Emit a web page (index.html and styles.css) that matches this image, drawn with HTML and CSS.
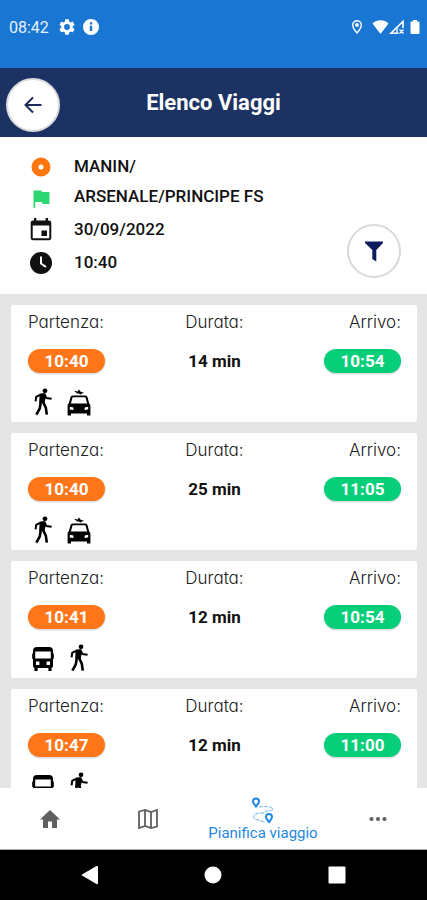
FILE: index.html
```html
<!DOCTYPE html>
<html lang="it">
<head>
<meta charset="utf-8">
<meta name="viewport" content="width=device-width, initial-scale=1">
<title>Elenco Viaggi</title>
<link rel="stylesheet" href="styles.css">
</head>
<body>
<svg class="sprite" aria-hidden="true">
  <symbol id="walk" viewBox="0 0 24 28">
    <circle cx="14" cy="2.800" r="2.400"/>
    <path d="M9.200 6.800 13.600 6.400 15.400 10 20.600 10.800" fill="none" stroke="currentColor" stroke-width="2"/>
    <path d="M9 6.800 5.200 8.800 4.600 13.400" fill="none" stroke="currentColor" stroke-width="2"/>
    <path d="M8.600 5.800 13.800 5.400 15 8 13.600 15 8.200 15Z"/>
    <path d="M9.800 14 8.800 20.400 5.400 26.600M12 14 14.800 19.600 15.800 26.600" fill="none" stroke="currentColor" stroke-width="2.600"/>
  </symbol>
  <symbol id="taxi" viewBox="0 0 24 28">
    <path d="M7 2.800 11 3.600 11.600 1.200 14 4 17 4.400 13.400 6.600 12 5.400 10.200 5.400Z"/>
    <path fill-rule="evenodd" d="M5.600 7.400H18.400Q20 7.400 20.500 9L22.200 15.400Q23.400 16 23.400 17.500V27.500H20V25.500H4V27.500H.6V17.500Q.6 16 1.800 15.400L3.500 9Q4 7.400 5.600 7.400ZM5.600 9.200 3.900 15.500H20.100L18.400 9.200ZM2.800 18.800V21.600L6.400 22V19.400ZM21.200 18.800 17.600 19.400V22L21.200 21.600Z"/>
  </symbol>
  <symbol id="bus" viewBox="0 0 24 28">
    <path fill-rule="evenodd" d="M6 3H18Q22 3 22 7V22Q22 23.500 20.600 23.800V27H17.400V24H6.600V27H3.400V23.800Q2 23.500 2 22V7Q2 3 6 3ZM4.200 7.400V14.400H19.800V7.400ZM5 17.500V21H8.400V17.500ZM15.600 17.500V21H19V17.500Z"/>
    <path d="M1.200 9.500H2.400V15H1.200ZM21.600 9.500H22.800V15H21.600Z"/>
  </symbol>
</svg>

<div class="status">
  <span class="clock">08:42</span>
  <svg width="16" height="16" viewBox="2 2 20 20"><path d="M19.14 12.94a7 7 0 0 0 0-1.88l2.03-1.58a.5.5 0 0 0 .12-.61l-1.92-3.32a.5.5 0 0 0-.59-.22l-2.39.96a7 7 0 0 0-1.62-.94l-.36-2.54a.5.5 0 0 0-.48-.41h-3.84a.5.5 0 0 0-.47.41l-.36 2.54a7 7 0 0 0-1.62.94l-2.39-.96a.5.5 0 0 0-.59.22L2.74 8.87a.5.5 0 0 0 .12.61l2.03 1.58a7 7 0 0 0 0 1.88l-2.03 1.58a.5.5 0 0 0-.12.61l1.92 3.32c.12.22.37.29.59.22l2.39-.96c.5.38 1.03.7 1.62.94l.36 2.54c.05.24.24.41.48.41h3.84c.24 0 .44-.17.47-.41l.36-2.54a7 7 0 0 0 1.62-.94l2.39.96c.22.08.47 0 .59-.22l1.92-3.32a.5.5 0 0 0-.12-.61ZM12 15.6a3.6 3.6 0 1 1 0-7.2 3.6 3.6 0 0 1 0 7.2Z"/></svg>
  <svg width="16" height="16" viewBox="2 2 20 20"><path fill-rule="evenodd" d="M12 2a10 10 0 1 0 0 20 10 10 0 0 0 0-20Zm1.500 15h-3v-6.500h3ZM13.500 9h-3V6h3Z"/></svg>
  <span class="spacer"></span>
  <svg class="pin" width="12" height="16" viewBox="0 0 12 16"><path d="M6 1.700a4.300 4.300 0 0 0-4.300 4.300C1.700 9 6 14 6 14s4.300-5 4.300-8A4.300 4.300 0 0 0 6 1.700Z" fill="none" stroke="currentColor" stroke-width="1.400"/><circle cx="6" cy="6" r="1.900"/></svg>
  <svg width="17" height="16" viewBox="0 0 17 16"><path d="M8.500 15 .5 4.500Q4 1.200 8.500 1.200T16.500 4.500Z"/></svg>
  <svg class="signal" width="16" height="16" viewBox="0 0 16 16"><path d="M14 9V2.500L2 14.300H9.500" fill="none" stroke="currentColor" stroke-width="1.600"/><path d="m10.500 10.500 4 4m0-4-4 4M8 9v5" stroke="currentColor" stroke-width="1.300"/></svg>
  <svg width="10" height="16" viewBox="0 0 10 16"><path d="M3 1H7V2.500H8.500Q9.500 2.500 9.500 3.500V14Q9.500 15 8.500 15H1.500Q.5 15 .5 14V3.500Q.5 2.500 1.500 2.500H3Z"/></svg>
</div>

<header class="header">
  <button class="round" aria-label="Indietro"><svg width="24" height="24" viewBox="0 0 24 24"><path d="M20.500 12H4.500M12 4.500 4.500 12 12 19.500" fill="none" stroke="currentColor" stroke-width="2"/></svg></button>
  <h1>Elenco Viaggi</h1>
</header>

<section class="summary">
  <ul class="details">
    <li><svg class="origin" width="24" height="24" viewBox="0 0 24 24"><circle cx="12" cy="13" r="6" fill="none" stroke="currentColor" stroke-width="7"/></svg>MANIN/</li>
    <li><svg class="dest" width="24" height="24" viewBox="0 0 24 24"><path d="M4.500 6.500H12.500L13 8H20.500V20H13.500L13 18H6.200V24H4.500Z"/></svg>ARSENALE/PRINCIPE FS</li>
    <li><svg width="24" height="24" viewBox="0 0 24 24"><path fill-rule="evenodd" d="M5 1H7.400V3.500H16.600V1H19V3.500H20Q22.300 3.500 22.300 5.800V21Q22.300 23.300 20 23.300H4Q1.700 23.300 1.700 21V5.800Q1.700 3.500 4 3.500H5ZM3.700 8.500V21.300H20.300V8.500Z"/><path d="M12.500 13.500H18V19H12.500Z"/></svg>30/09/2022</li>
    <li><svg width="24" height="24" viewBox="0 0 24 24"><circle cx="12" cy="13" r="11"/><path d="M12 6.500V13.500L17 17" fill="none" stroke="#fff" stroke-width="2"/></svg>10:40</li>
  </ul>
  <button class="round filter" aria-label="Filtra"><svg width="20" height="22" viewBox="0 0 20 22"><path d="M1 1.500H19V3L12.300 10V21.500L8.300 19V10L1 3Z"/></svg></button>
</section>

<main class="list">
  <article class="card">
    <dl>
      <div><dt>Partenza:</dt><dd class="pill out">10:40</dd></div>
      <div><dt>Durata:</dt><dd>14 min</dd></div>
      <div><dt>Arrivo:</dt><dd class="pill in">10:54</dd></div>
    </dl>
    <div class="modes"><svg><use href="#walk"/></svg><svg><use href="#taxi"/></svg></div>
  </article>
  <article class="card">
    <dl>
      <div><dt>Partenza:</dt><dd class="pill out">10:40</dd></div>
      <div><dt>Durata:</dt><dd>25 min</dd></div>
      <div><dt>Arrivo:</dt><dd class="pill in">11:05</dd></div>
    </dl>
    <div class="modes"><svg><use href="#walk"/></svg><svg><use href="#taxi"/></svg></div>
  </article>
  <article class="card">
    <dl>
      <div><dt>Partenza:</dt><dd class="pill out">10:41</dd></div>
      <div><dt>Durata:</dt><dd>12 min</dd></div>
      <div><dt>Arrivo:</dt><dd class="pill in">10:54</dd></div>
    </dl>
    <div class="modes"><svg><use href="#bus"/></svg><svg><use href="#walk"/></svg></div>
  </article>
  <article class="card">
    <dl>
      <div><dt>Partenza:</dt><dd class="pill out">10:47</dd></div>
      <div><dt>Durata:</dt><dd>12 min</dd></div>
      <div><dt>Arrivo:</dt><dd class="pill in">11:00</dd></div>
    </dl>
    <div class="modes"><svg><use href="#bus"/></svg><svg><use href="#walk"/></svg></div>
  </article>
</main>

<nav class="tabs">
  <a href="#home" aria-label="Home"><svg width="24" height="24" viewBox="0 0 24 24"><path d="M10 21V14.500H14V21H19V12.500H22L12 3 2 12.500H5V21Z"/></svg></a>
  <a href="#mappa" aria-label="Mappa"><svg width="24" height="24" viewBox="0 0 24 24"><path d="M3 4.500 9 3 15 5 21 3V19.500L15 21 9 19 3 21ZM9 3V19M15 5V21" fill="none" stroke="currentColor" stroke-width="1.800"/></svg></a>
  <a class="active" href="#pianifica">
    <svg width="24" height="28" viewBox="0 0 24 28"><g fill="none" stroke="currentColor"><path d="M5 9.500C2.500 6.500 2 5.500 2 4.500a3 3 0 0 1 6 0C8 5.500 7.500 6.500 5 9.500Z" stroke-width="2"/><path d="M18 25C15.500 22 15 21 15 20a3 3 0 0 1 6 0C21 21 20.500 22 18 25Z" stroke-width="2"/><path d="M8 10C13 8.500 22 9.500 22 12.500 21 14 17 14 14 14.500M13 16C7 15.500 2.500 17.500 2.500 20 3 23 10 23 14 25.500" stroke-width="1.200" stroke-dasharray="4 1" opacity=".5"/></g></svg>
    <span>Pianifica viaggio</span>
  </a>
  <a href="#altro" aria-label="Altro"><svg width="24" height="24" viewBox="0 0 24 24"><circle cx="5.500" cy="12" r="2.100"/><circle cx="12" cy="12" r="2.100"/><circle cx="18.500" cy="12" r="2.100"/></svg></a>
</nav>

<div class="system">
  <button aria-label="Indietro"><svg width="18" height="20" viewBox="0 0 18 20"><path d="M17 2V18Q17 19.500 15.500 19L1 10.500Q.4 10 1 9.500L15.500 1Q17 .5 17 2Z"/></svg></button>
  <button aria-label="Schermata iniziale"><svg width="18" height="18" viewBox="0 0 18 18"><circle cx="9" cy="9" r="8.500"/></svg></button>
  <button aria-label="App recenti"><svg width="18" height="18" viewBox="0 0 18 18"><rect x=".5" y=".5" width="17" height="17" rx="1"/></svg></button>
</div>
</body>
</html>
```
FILE: styles.css
```css
* {
  box-sizing: border-box;
}

body {
  margin: 0;
  height: 100vh;
  display: flex;
  flex-direction: column;
  background: #fff;
  color: #111;
  font-family: Roboto, sans-serif;
}

svg {
  display: block;
  flex: none;
  fill: currentColor;
}

button {
  padding: 0;
  border: 0;
  background: none;
  color: inherit;
}

.sprite {
  display: none;
}

.status {
  flex: none;
  height: 68px;
  padding: 0 7px 14px 9px;
  display: flex;
  align-items: center;
  background: #1976d2;
  color: #e8f1fb;
  font-size: 16px;
}

.status svg {
  color: #fff;
}

.clock {
  margin-right: 10px;
}

.clock + svg {
  margin-right: 8px;
}

.spacer {
  flex: 1;
}

.pin {
  margin-right: 9px;
}

.signal {
  margin-right: 5px;
}

.header {
  flex: none;
  height: 69px;
  padding: 5px 6px 0;
  display: grid;
  grid-template-columns: 54px 1fr 54px;
  align-items: center;
  background: #1b3263;
}

.header h1 {
  margin: 0 0 4px;
  color: #fff;
  font-size: 22px;
  font-weight: 700;
  line-height: 26px;
  text-align: center;
}

.round {
  width: 54px;
  height: 54px;
  display: grid;
  place-items: center;
  border: 2px solid #d9d9dc;
  border-radius: 50%;
  background: #fff;
  color: #1b2b5b;
}

.summary {
  flex: none;
  padding: 14px 26px 16px 29px;
  display: flex;
  align-items: flex-end;
  justify-content: space-between;
}

.details {
  margin: 0;
  padding: 0 0 1px;
  display: grid;
  grid-template-rows: 30px 30px 36px 30px;
  list-style: none;
  font-size: 17px;
  font-weight: 500;
}

.details li {
  display: flex;
  align-items: center;
  gap: 21px;
}

.origin {
  color: #ff760f;
}

.dest {
  color: #2bd673;
}

.filter {
  color: #0c1c5c;
}

.list {
  flex: 1;
  min-height: 0;
  padding: 11px 10px 0 11px;
  display: flex;
  flex-direction: column;
  gap: 11px;
  overflow: hidden;
  background: #e5e5e5;
}

.card {
  flex: none;
  padding: 6px 16px 6px 17px;
  border-radius: 2px;
  background: #fff;
}

.card dl {
  margin: 0;
  display: grid;
  grid-template-columns: 1fr 1fr 1fr;
}

.card dl div {
  display: flex;
  flex-direction: column;
  align-items: center;
  gap: 16px;
}

.card dl div:first-child {
  align-items: flex-start;
}

.card dl div:last-child {
  align-items: flex-end;
}

.card dt {
  color: #222;
  font-family: Inter, sans-serif;
  font-feature-settings: "cv11";
  font-size: 17px;
  font-weight: 300;
  line-height: 22px;
}

.card dd {
  margin: 0;
  font-size: 17px;
  font-weight: 700;
  line-height: 24px;
}

.card .pill {
  width: 77px;
  border-radius: 12px;
  color: #fff;
  text-align: center;
  box-shadow: 0 1px 2px #0003;
}

.out {
  background: #ff7519;
}

.in {
  background: #07ce78;
}

.modes {
  margin-top: 15px;
  padding-left: 3px;
  display: flex;
  gap: 12px;
  color: #000;
}

.modes svg {
  width: 24px;
  height: 28px;
}

.tabs {
  flex: none;
  height: 62px;
  display: grid;
  grid-template-columns: 1fr 1fr 132px 1fr;
  padding-left: 1px;
  border-bottom: 1px solid #aaa;
  background: #fff;
}

.tabs a {
  display: flex;
  flex-direction: column;
  align-items: center;
  justify-content: center;
  color: #606060;
  font-size: 15px;
  line-height: 16px;
  text-decoration: none;
}

.tabs .active {
  color: #1e88e5;
}

.system {
  flex: none;
  height: 50px;
  padding: 0 28px;
  display: grid;
  grid-template-columns: 1fr 1fr 1fr;
  background: #000;
  color: #fff;
}

.system button {
  display: grid;
  place-items: center;
}
```
